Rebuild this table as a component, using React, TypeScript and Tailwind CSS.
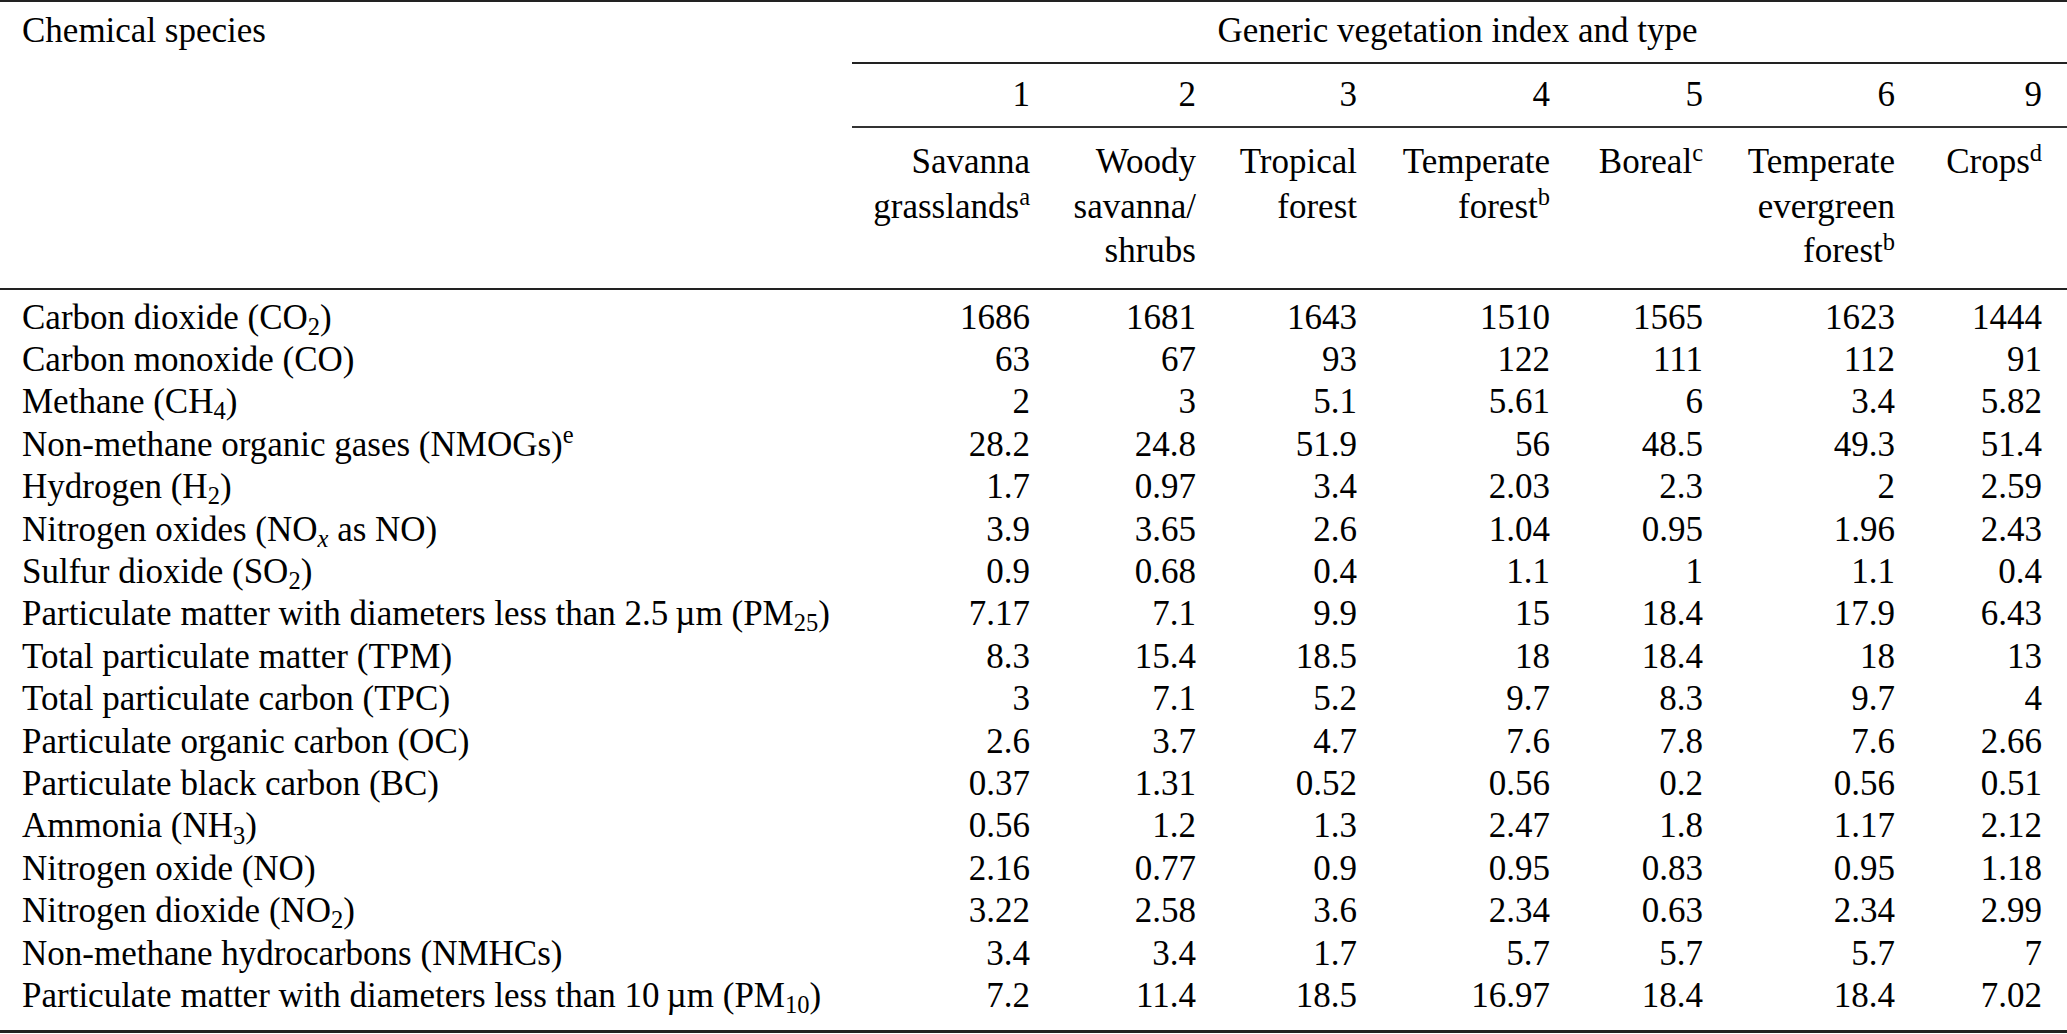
import type { ReactNode } from "react";

type EmissionRow = {
  label: ReactNode;
  values: string[];
};

const Sub = ({ children }: { children: ReactNode }) => (
  <sub className="text-[0.7em]">{children}</sub>
);

const Sup = ({ children }: { children: ReactNode }) => (
  <sup className="text-[0.7em]">{children}</sup>
);

const vegetationIndex = ["1", "2", "3", "4", "5", "6", "9"];

const vegetationTypes: ReactNode[] = [
  <>
    Savanna
    <br />
    grasslands<Sup>a</Sup>
  </>,
  <>
    Woody
    <br />
    savanna/
    <br />
    shrubs
  </>,
  <>
    Tropical
    <br />
    forest
  </>,
  <>
    Temperate
    <br />
    forest<Sup>b</Sup>
  </>,
  <>
    Boreal<Sup>c</Sup>
  </>,
  <>
    Temperate
    <br />
    evergreen
    <br />
    forest<Sup>b</Sup>
  </>,
  <>
    Crops<Sup>d</Sup>
  </>,
];

const rows: EmissionRow[] = [
  { label: <>Carbon dioxide (CO<Sub>2</Sub>)</>, values: ["1686", "1681", "1643", "1510", "1565", "1623", "1444"] },
  { label: <>Carbon monoxide (CO)</>, values: ["63", "67", "93", "122", "111", "112", "91"] },
  { label: <>Methane (CH<Sub>4</Sub>)</>, values: ["2", "3", "5.1", "5.61", "6", "3.4", "5.82"] },
  { label: <>Non-methane organic gases (NMOGs)<Sup>e</Sup></>, values: ["28.2", "24.8", "51.9", "56", "48.5", "49.3", "51.4"] },
  { label: <>Hydrogen (H<Sub>2</Sub>)</>, values: ["1.7", "0.97", "3.4", "2.03", "2.3", "2", "2.59"] },
  { label: <>Nitrogen oxides (NO<Sub><i>x</i></Sub> as NO)</>, values: ["3.9", "3.65", "2.6", "1.04", "0.95", "1.96", "2.43"] },
  { label: <>Sulfur dioxide (SO<Sub>2</Sub>)</>, values: ["0.9", "0.68", "0.4", "1.1", "1", "1.1", "0.4"] },
  { label: <>Particulate matter with diameters less than 2.5{"\u2009"}µm (PM<Sub>25</Sub>)</>, values: ["7.17", "7.1", "9.9", "15", "18.4", "17.9", "6.43"] },
  { label: <>Total particulate matter (TPM)</>, values: ["8.3", "15.4", "18.5", "18", "18.4", "18", "13"] },
  { label: <>Total particulate carbon (TPC)</>, values: ["3", "7.1", "5.2", "9.7", "8.3", "9.7", "4"] },
  { label: <>Particulate organic carbon (OC)</>, values: ["2.6", "3.7", "4.7", "7.6", "7.8", "7.6", "2.66"] },
  { label: <>Particulate black carbon (BC)</>, values: ["0.37", "1.31", "0.52", "0.56", "0.2", "0.56", "0.51"] },
  { label: <>Ammonia (NH<Sub>3</Sub>)</>, values: ["0.56", "1.2", "1.3", "2.47", "1.8", "1.17", "2.12"] },
  { label: <>Nitrogen oxide (NO)</>, values: ["2.16", "0.77", "0.9", "0.95", "0.83", "0.95", "1.18"] },
  { label: <>Nitrogen dioxide (NO<Sub>2</Sub>)</>, values: ["3.22", "2.58", "3.6", "2.34", "0.63", "2.34", "2.99"] },
  { label: <>Non-methane hydrocarbons (NMHCs)</>, values: ["3.4", "3.4", "1.7", "5.7", "5.7", "5.7", "7"] },
  { label: <>Particulate matter with diameters less than 10{"\u2009"}µm (PM<Sub>10</Sub>)</>, values: ["7.2", "11.4", "18.5", "16.97", "18.4", "18.4", "7.02"] },
];

export default function App() {
  const last = rows.length - 1;

  return (
    <div className="h-[1034px] w-[2067px] overflow-hidden bg-white text-black [font-family:'Liberation_Serif','Times_New_Roman',serif]">
      <table className="w-[2067px] table-fixed border-separate border-spacing-0 text-[35px]">
        <colgroup>
          <col className="w-[852px]" />
          <col className="w-[199px]" />
          <col className="w-[166px]" />
          <col className="w-[161px]" />
          <col className="w-[193px]" />
          <col className="w-[153px]" />
          <col className="w-[192px]" />
          <col className="w-[151px]" />
        </colgroup>
        <thead>
          <tr>
            <th
              rowSpan={3}
              className="border-t-2 border-b-2 border-[#222] pt-[8px] pl-[22px] text-left align-top font-normal leading-[42px]"
            >
              Chemical species
            </th>
            <th
              colSpan={7}
              className="border-t-2 border-b-2 border-[#222] px-[21px] pr-[25px] pt-[8px] pb-[10px] text-center align-top font-normal leading-[42px]"
            >
              Generic vegetation index and type
            </th>
          </tr>
          <tr>
            {vegetationIndex.map((index, i) => (
              <th
                key={index}
                className={`border-b-2 border-[#333] pt-[10px] pb-[10px] text-right align-top font-normal leading-[42px] ${
                  i === vegetationIndex.length - 1 ? "pr-[25px]" : "pr-[21px]"
                }`}
              >
                {index}
              </th>
            ))}
          </tr>
          <tr>
            {vegetationTypes.map((type, i) => (
              <th
                key={i}
                className={`border-b-2 border-[#222] pt-[12px] pb-[14px] text-right align-top font-normal leading-[44.5px] ${
                  i === vegetationTypes.length - 1 ? "pr-[25px]" : "pr-[21px]"
                }`}
              >
                {type}
              </th>
            ))}
          </tr>
        </thead>
        <tbody>
          {rows.map((row, r) => {
            const edge =
              r === 0 ? "pt-[7px]" : r === last ? "pb-[13px] border-b-[3px] border-[#222]" : "";
            return (
              <tr key={r}>
                <td className={`pl-[22px] text-left align-top leading-[42.4px] whitespace-nowrap ${edge}`}>
                  {row.label}
                </td>
                {row.values.map((value, c) => (
                  <td
                    key={c}
                    className={`text-right align-top leading-[42.4px] ${edge} ${
                      c === row.values.length - 1 ? "pr-[25px]" : "pr-[21px]"
                    }`}
                  >
                    {value}
                  </td>
                ))}
              </tr>
            );
          })}
        </tbody>
      </table>
    </div>
  );
}
